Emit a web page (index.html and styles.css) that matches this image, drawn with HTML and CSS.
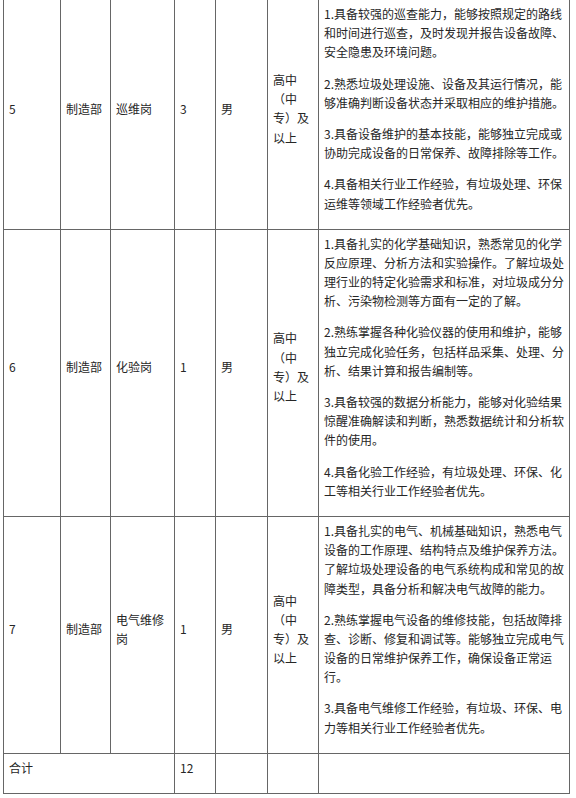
FILE: index.html
```html
<!DOCTYPE html>
<html lang="zh-CN">
<head>
<meta charset="utf-8">
<title>岗位需求表</title>
<link rel="stylesheet" href="styles.css">
</head>
<body>
<table class="jobs">
  <colgroup>
    <col class="c-no">
    <col class="c-dept">
    <col class="c-post">
    <col class="c-num">
    <col class="c-sex">
    <col class="c-edu">
    <col class="c-req">
  </colgroup>
  <tbody>
    <tr>
      <td><p>5</p></td>
      <td><p>制造部</p></td>
      <td><p>巡维岗</p></td>
      <td><p>3</p></td>
      <td><p>男</p></td>
      <td><p>高中（中专）及以上</p></td>
      <td class="req">
        <p>1.具备较强的巡查能力，能够按照规定的路线和时间进行巡查，及时发现并报告设备故障、安全隐患及环境问题。</p>
        <p>2.熟悉垃圾处理设施、设备及其运行情况，能够准确判断设备状态并采取相应的维护措施。</p>
        <p>3.具备设备维护的基本技能，能够独立完成或协助完成设备的日常保养、故障排除等工作。</p>
        <p>4.具备相关行业工作经验，有垃圾处理、环保运维等领域工作经验者优先。</p>
      </td>
    </tr>
    <tr>
      <td><p>6</p></td>
      <td><p>制造部</p></td>
      <td><p>化验岗</p></td>
      <td><p>1</p></td>
      <td><p>男</p></td>
      <td><p>高中（中专）及以上</p></td>
      <td class="req">
        <p>1.具备扎实的化学基础知识，熟悉常见的化学反应原理、分析方法和实验操作。了解垃圾处理行业的特定化验需求和标准，对垃圾成分分析、污染物检测等方面有一定的了解。</p>
        <p>2.熟练掌握各种化验仪器的使用和维护，能够独立完成化验任务，包括样品采集、处理、分析、结果计算和报告编制等。</p>
        <p>3.具备较强的数据分析能力，能够对化验结果惊醒准确解读和判断，熟悉数据统计和分析软件的使用。</p>
        <p>4.具备化验工作经验，有垃圾处理、环保、化工等相关行业工作经验者优先。</p>
      </td>
    </tr>
    <tr>
      <td><p>7</p></td>
      <td><p>制造部</p></td>
      <td><p>电气维修岗</p></td>
      <td><p>1</p></td>
      <td><p>男</p></td>
      <td><p>高中（中专）及以上</p></td>
      <td class="req">
        <p>1.具备扎实的电气、机械基础知识，熟悉电气设备的工作原理、结构特点及维护保养方法。了解垃圾处理设备的电气系统构成和常见的故障类型，具备分析和解决电气故障的能力。</p>
        <p>2.熟练掌握电气设备的维修技能，包括故障排查、诊断、修复和调试等。能够独立完成电气设备的日常维护保养工作，确保设备正常运行。</p>
        <p>3.具备电气维修工作经验，有垃圾、环保、电力等相关行业工作经验者优先。</p>
      </td>
    </tr>
    <tr class="total">
      <td colspan="3"><p>合计</p></td>
      <td><p>12</p></td>
      <td></td>
      <td></td>
      <td class="req"></td>
    </tr>
  </tbody>
</table>
</body>
</html>
```
FILE: styles.css
```css
html, body {
  margin: 0;
  padding: 0;
  background: #ffffff;
}

body {
  font-family: "Noto Sans CJK SC", "Noto Sans", sans-serif;
  font-size: 12px;
  line-height: 1.6;
  color: #262626;
}

.jobs {
  border-collapse: collapse;
  table-layout: fixed;
  width: 567px;
  margin: -1px 0 0 3px;
}

.c-no { width: 57px; }
.c-dept { width: 50px; }
.c-post { width: 64px; }
.c-num { width: 41px; }
.c-sex { width: 52px; }
.c-edu { width: 51px; }
.c-req { width: 251px; }

.jobs td {
  border: 1px solid #666666;
  padding: 4px 5px;
  vertical-align: middle;
  text-align: left;
  word-break: normal;
}

.jobs td.req {
  padding: 4px 3px 4px 5px;
}

.jobs p {
  margin: 0 0 12px 0;
}
```
